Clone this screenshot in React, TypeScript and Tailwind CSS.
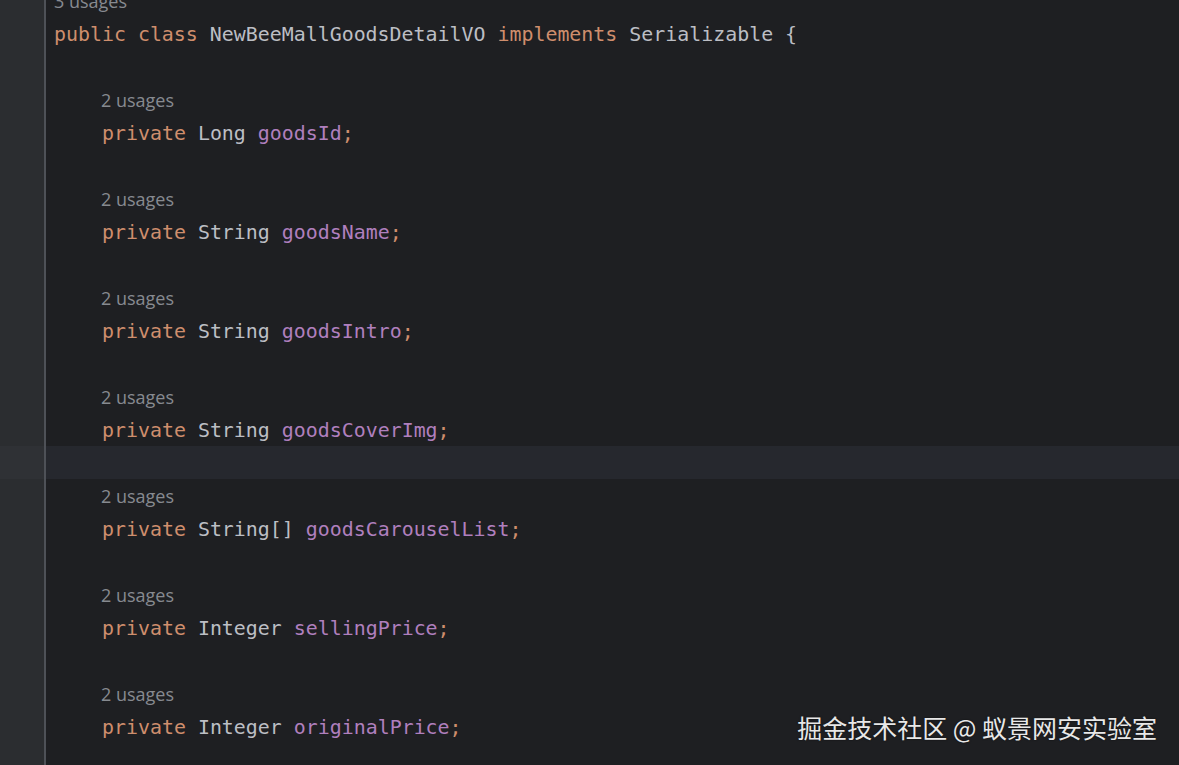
import React from 'react';

type Tok = { t: string; c: string };

const KW = 'text-[#cf8e6d]';
const PL = 'text-[#bcbec4]';
const FD = 'text-[#b07fbe]';

const fields: [string, string][] = [
  ['Long', 'goodsId'],
  ['String', 'goodsName'],
  ['String', 'goodsIntro'],
  ['String', 'goodsCoverImg'],
  ['String[]', 'goodsCarouselList'],
  ['Integer', 'sellingPrice'],
  ['Integer', 'originalPrice'],
];

type Line =
  | { kind: 'hint'; text: string; indent: boolean }
  | { kind: 'code'; toks: Tok[]; indent: boolean }
  | { kind: 'blank'; active?: boolean };

const lines: Line[] = [
  { kind: 'hint', text: '3 usages', indent: false },
  {
    kind: 'code',
    indent: false,
    toks: [
      { t: 'public class ', c: KW },
      { t: 'NewBeeMallGoodsDetailVO ', c: PL },
      { t: 'implements ', c: KW },
      { t: 'Serializable {', c: PL },
    ],
  },
];

fields.forEach(([type, name], i) => {
  lines.push({ kind: 'blank', active: i === 4 });
  lines.push({ kind: 'hint', text: '2 usages', indent: true });
  lines.push({
    kind: 'code',
    indent: true,
    toks: [
      { t: 'private ', c: KW },
      { t: type + ' ', c: PL },
      { t: name, c: FD },
      { t: ';', c: KW },
    ],
  });
});
lines.push({ kind: 'blank' });

export default function App() {
  return (
    <div className="relative h-[765px] w-[1179px] overflow-hidden bg-[#1e1f22]">
      <div className="mt-[-16px] flex flex-col">
        {lines.map((ln, i) => {
          const active = ln.kind === 'blank' && ln.active;
          return (
            <div key={i} className="flex h-[33px]">
              <div className={`w-[44px] shrink-0 ${active ? 'bg-[#2f3135]' : 'bg-[#2b2d30]'}`} />
              <div className="w-[2px] shrink-0 bg-[#4e5157]" />
              <div
                className={`flex flex-1 items-center pl-[8px] ${active ? 'bg-[#26282e]' : ''}`}
              >
                {ln.kind === 'hint' && (
                  <span
                    className={`pt-[2px] text-[18px] text-[#878a90] ${ln.indent ? 'pl-[47px]' : ''}`}
                    style={{ fontFamily: '"Open Sans", "Noto Sans", sans-serif' }}
                  >
                    {ln.text}
                  </span>
                )}
                {ln.kind === 'code' && (
                  <span
                    className={`whitespace-pre pt-[2px] text-[19.92px] ${ln.indent ? 'pl-[48px]' : ''}`}
                    style={{ fontFamily: '"DejaVu Sans Mono", "Liberation Mono", monospace' }}
                  >
                    {ln.toks.map((tk, j) => (
                      <span key={j} className={tk.c}>
                        {tk.t}
                      </span>
                    ))}
                  </span>
                )}
              </div>
            </div>
          );
        })}
      </div>
      <div
        className="absolute right-[22px] top-[709px] text-[25px] text-[#e8e8e8]"
        style={{ fontFamily: '"Noto Sans CJK SC", "Noto Sans", sans-serif', textShadow: '0 0 2px rgba(0,0,0,0.6)' }}
      >
        掘金技术社区 @ 蚁景网安实验室
      </div>
    </div>
  );
}
